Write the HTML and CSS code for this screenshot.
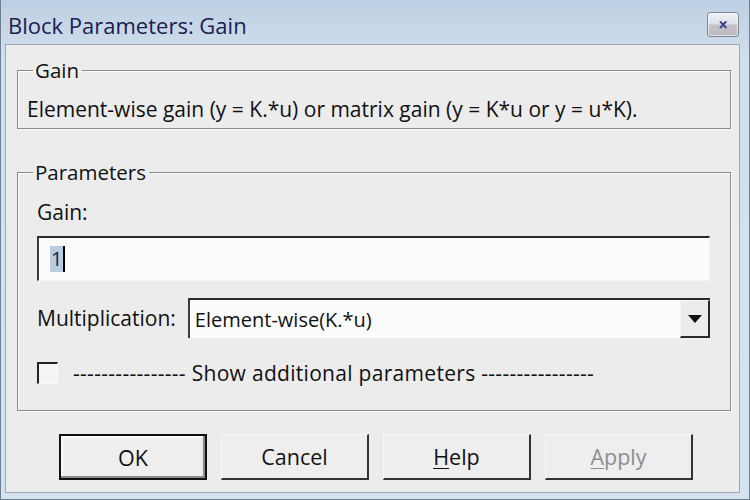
FILE: index.html
```html
<!DOCTYPE html>
<html>
<head>
<meta charset="utf-8">
<link rel="stylesheet" href="styles.css">
</head>
<body>
<div class="window">
  <div class="titlebar">
    <span class="title">Block Parameters: Gain</span>
    <span class="close">×</span>
  </div>
  <div class="client">
    <fieldset class="group group-gain">
      <legend>Gain</legend>
      <div class="desc">Element-wise gain (y = K.*u) or matrix gain (y = K*u or y = u*K).</div>
    </fieldset>
    <fieldset class="group group-params">
      <legend>Parameters</legend>
      <div class="label">Gain:</div>
      <div class="textbox"><span class="sel">1</span><span class="caret"></span></div>
      <div class="row-mult">
        <span class="label">Multiplication:</span>
        <div class="combo">
          <span class="combo-text">Element-wise(K.*u)</span>
          <span class="combo-btn"><svg width="14" height="8" viewBox="0 0 14 8"><path d="M0 0H14L7 8Z" fill="#111"/></svg></span>
        </div>
      </div>
      <div class="row-check">
        <span class="checkbox"></span>
        <span class="check-text">---------------- Show additional parameters ----------------</span>
      </div>
    </fieldset>
    <div class="buttons">
      <div class="btn btn-default">OK</div>
      <div class="btn">Cancel</div>
      <div class="btn"><u>H</u>elp</div>
      <div class="btn btn-disabled"><u>A</u>pply</div>
    </div>
  </div>
</div>
</body>
</html>
```
FILE: styles.css
```css
* { box-sizing: border-box; }
html, body { margin: 0; padding: 0; }
body {
  width: 750px;
  height: 500px;
  overflow: hidden;
  font-family: "Open Sans", "Noto Sans", sans-serif;
  color: #111;
}
.window {
  width: 750px;
  height: 500px;
  background: linear-gradient(#bccfe3, #d3e0ec 60px, #d6e2ee);
  border-left: 1px solid #6c7f93;
  border-right: 1px solid #6c7f93;
  border-bottom: 1px solid #6c7f93;
  padding: 0 9px 6px 4px;
  display: flex;
  flex-direction: column;
}
.titlebar {
  height: 44px;
  display: flex;
  align-items: center;
  justify-content: space-between;
  padding-left: 3px;
}
.title {
  font-size: 22px;
  color: #1c1c50;
  margin-top: 6px;
}
.close {
  width: 32px;
  height: 25px;
  margin-top: 4px;
  margin-right: 1px;
  border: 1px solid #76879a;
  border-radius: 3px;
  background: linear-gradient(#eef1f4 0%, #dde2e8 48%, #c3c0c6 52%, #bdbac0 100%);
  box-shadow: inset 0 0 0 1px rgba(255,255,255,0.6);
  display: flex;
  align-items: center;
  justify-content: center;
  font-size: 17px;
  line-height: 1;
  color: #3e3e86;
  font-weight: bold;
}
.client {
  flex: 1;
  background: #ececec;
  border: 1px solid #9aa9b8;
  display: flex;
  flex-direction: column;
  padding: 0 8px 0 11px;
}
.group {
  margin: 0;
  border: 1px solid #8a8a8a;
  box-shadow: 1px 1px 0 #fafafa, inset 1px 1px 0 #fafafa;
  padding: 0 20px 0 19px;
  min-width: 0;
}
.group legend {
  font-size: 20.5px;
  line-height: 24px;
  padding: 0 3px 0 2px;
  margin-left: -4px;
}
.group-gain {
  margin-top: 13px;
  padding: 15px 10px 7px 9px;
}
.group-gain legend {
  margin-left: 6px;
}
.desc {
  font-size: 21px;
  line-height: 24px;
  white-space: nowrap;
}
.group-params {
  margin-top: 31px;
  padding-top: 16px;
  padding-bottom: 25px;
}
.label {
  font-size: 21px;
  line-height: 24px;
}
.textbox {
  margin-top: 12px;
  height: 45px;
  background: #fbfbfb;
  border-top: 2px solid #2a2a2a;
  border-left: 2px solid #3a3a3a;
  border-right: 1px solid #f4f4f4;
  border-bottom: 1px solid #f4f4f4;
  display: flex;
  align-items: center;
  padding-left: 11px;
  font-size: 20px;
}
.sel {
  background: #b9cde0;
  color: #223;
  line-height: 26px;
  padding: 0 1px;
}
.caret {
  width: 2px;
  height: 26px;
  background: #000;
}
.row-mult {
  margin-top: 17px;
  display: flex;
  align-items: center;
  gap: 12px;
}
.combo {
  flex: 1;
  height: 40px;
  background: #fbfbfb;
  border-top: 2px solid #2a2a2a;
  border-left: 2px solid #3a3a3a;
  display: flex;
  align-items: stretch;
}
.combo-text {
  flex: 1;
  font-size: 20px;
  display: flex;
  align-items: center;
  padding-left: 5px;
}
.combo-btn {
  width: 30px;
  background: #ececec;
  border-right: 2px solid #2a2a2a;
  border-bottom: 2px solid #2a2a2a;
  border-top: 1px solid #f6f6f6;
  border-left: 1px solid #f6f6f6;
  display: flex;
  align-items: center;
  justify-content: center;
}
.row-check {
  margin-top: 23px;
  display: flex;
  align-items: center;
  gap: 15px;
}
.checkbox {
  width: 21px;
  height: 22px;
  background: #f4f4f4;
  border-top: 2px solid #222;
  border-left: 2px solid #222;
  border-right: 1px solid #fafafa;
  border-bottom: 1px solid #fafafa;
}
.check-text {
  font-size: 21px;
  line-height: 24px;
  white-space: nowrap;
  letter-spacing: 0.3px;
}
.buttons {
  margin-top: 23px;
  display: flex;
  gap: 14px;
  padding-left: 42px;
}
.btn {
  width: 148px;
  height: 46px;
  display: flex;
  align-items: center;
  justify-content: center;
  font-size: 21.5px;
  background: #eeeeee;
  border-top: 1px solid #f8f8f8;
  border-left: 1px solid #f8f8f8;
  border-right: 2px solid #333;
  border-bottom: 2px solid #333;
  color: #111;
}
.btn u { text-decoration-thickness: 1px; text-underline-offset: 3px; }
.btn-default {
  border: 2px solid #111;
  box-shadow: inset -2px -2px 0 #8a8a8a, inset 2px 2px 0 #fafafa;
}
.btn-disabled { color: #8d8d8d; }
```
